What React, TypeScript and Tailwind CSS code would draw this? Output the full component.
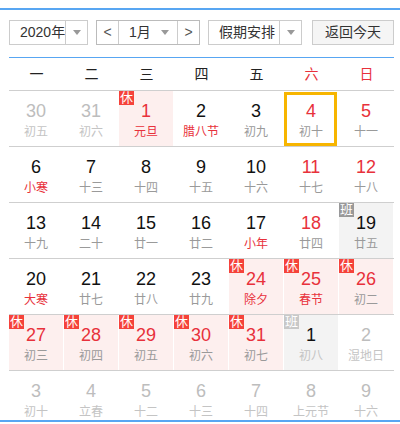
import React from "react";

type Cell = {
  d: number;
  l: string;
  other?: boolean;
  redNum?: boolean;
  redLunar?: boolean;
  rest?: boolean;
  work?: boolean;
  sel?: boolean;
};

const rows: Cell[][] = [
  [
    { d: 30, l: "初五", other: true },
    { d: 31, l: "初六", other: true },
    { d: 1, l: "元旦", rest: true, redNum: true, redLunar: true },
    { d: 2, l: "腊八节", redLunar: true },
    { d: 3, l: "初九" },
    { d: 4, l: "初十", redNum: true, sel: true },
    { d: 5, l: "十一", redNum: true },
  ],
  [
    { d: 6, l: "小寒", redLunar: true },
    { d: 7, l: "十三" },
    { d: 8, l: "十四" },
    { d: 9, l: "十五" },
    { d: 10, l: "十六" },
    { d: 11, l: "十七", redNum: true },
    { d: 12, l: "十八", redNum: true },
  ],
  [
    { d: 13, l: "十九" },
    { d: 14, l: "二十" },
    { d: 15, l: "廿一" },
    { d: 16, l: "廿二" },
    { d: 17, l: "小年", redLunar: true },
    { d: 18, l: "廿四", redNum: true },
    { d: 19, l: "廿五", work: true },
  ],
  [
    { d: 20, l: "大寒", redLunar: true },
    { d: 21, l: "廿七" },
    { d: 22, l: "廿八" },
    { d: 23, l: "廿九" },
    { d: 24, l: "除夕", rest: true, redNum: true, redLunar: true },
    { d: 25, l: "春节", rest: true, redNum: true, redLunar: true },
    { d: 26, l: "初二", rest: true, redNum: true },
  ],
  [
    { d: 27, l: "初三", rest: true, redNum: true },
    { d: 28, l: "初四", rest: true, redNum: true },
    { d: 29, l: "初五", rest: true, redNum: true },
    { d: 30, l: "初六", rest: true, redNum: true },
    { d: 31, l: "初七", rest: true, redNum: true },
    { d: 1, l: "初八", work: true, other: true },
    { d: 2, l: "湿地日", other: true },
  ],
  [
    { d: 3, l: "初十", other: true },
    { d: 4, l: "立春", other: true },
    { d: 5, l: "十二", other: true },
    { d: 6, l: "十三", other: true },
    { d: 7, l: "十四", other: true },
    { d: 8, l: "上元节", other: true },
    { d: 9, l: "十六", other: true },
  ],
];

const Arrow = () => (
  <span className="inline-block w-0 h-0 border-l-[4px] border-r-[4px] border-t-[5px] border-l-transparent border-r-transparent border-t-[#999]" />
);

function DayCell({ c }: { c: Cell }) {
  let bg = "";
  if (c.rest) bg = "bg-[#fdefee]";
  if (c.work) bg = "bg-[#f3f3f3]";
  let numColor = "text-[#111]";
  if (c.redNum) numColor = "text-[#e8313b]";
  if (c.other && !c.work) numColor = "text-[#bdbdbd]";
  let lunarColor = "text-[#9a9a9a]";
  if (c.redLunar) lunarColor = "text-[#e8313b]";
  if (c.other) lunarColor = "text-[#c4c4c4]";
  return (
    <div className="relative h-[55px]">
      <div className={`h-full mr-px flex flex-col items-center ${bg}`}>
        <span className={`mt-[9px] text-[18px] leading-[22px] ${numColor}`}>{c.d}</span>
        <span className={`mt-[2px] text-[12px] leading-[16px] whitespace-nowrap ${lunarColor}`}>{c.l}</span>
      </div>
      {c.rest && (
        <span className="absolute left-0 top-0 w-[15px] h-[14px] bg-[#f5423a] text-white text-[13px] leading-[14px] flex items-center justify-center">
          休
        </span>
      )}
      {c.work && (
        <span
          className={`absolute left-0 top-0 w-[15px] h-[14px] text-white text-[13px] leading-[14px] flex items-center justify-center ${
            c.other ? "bg-[#c8c8c8]" : "bg-[#999]"
          }`}
        >
          班
        </span>
      )}
      {c.sel && (
        <div className="absolute left-0 right-[2px] top-[1px] bottom-0 border-[3px] border-[#f7b500]" />
      )}
    </div>
  );
}

export default function App() {
  const week = ["一", "二", "三", "四", "五", "六", "日"];
  return (
    <div className="w-[400px] h-[424px] bg-white font-['Liberation_Sans','Noto_Sans_CJK_SC',sans-serif]">
      <div className="mt-2 h-[414px] border-t-2 border-b-2 border-[#58a6f2]">
        <div className="pl-[9px] pt-[10px] flex items-center h-[35px] text-[14px] text-[#333] whitespace-nowrap">
          <div className="w-[79px] h-[25px] border border-[#ccc] flex">
            <div className="w-[55px] pl-[10px] flex items-center">2020年</div>
            <div className="flex-1 border-l border-[#ccc] flex items-center justify-center">
              <Arrow />
            </div>
          </div>
          <div className="ml-[8px] w-[104px] h-[25px] border border-[#bbb] flex">
            <div className="w-[22px] border-r border-[#ccc] flex items-center justify-center text-[#555]">&lt;</div>
            <div className="flex-1 flex items-center pl-[10px]">
              <span>1月</span>
              <span className="ml-auto mr-[8px] flex"><Arrow /></span>
            </div>
            <div className="w-[22px] border-l border-[#ccc] flex items-center justify-center text-[#555]">&gt;</div>
          </div>
          <div className="ml-[8px] w-[94px] h-[25px] border border-[#ccc] flex">
            <div className="w-[70px] pl-[10px] flex items-center">假期安排</div>
            <div className="flex-1 border-l border-[#ccc] flex items-center justify-center">
              <Arrow />
            </div>
          </div>
          <div className="ml-[10px] w-[82px] h-[25px] border border-[#ccc] bg-[#f5f5f5] flex items-center justify-center">
            返回今天
          </div>
        </div>
        <div className="ml-[9px] w-[385px] mt-[12px] border-t border-[#58a6f2]">
          <div className="grid grid-cols-7 h-[32px] items-center text-[14px]">
            {week.map((w, i) => (
              <div key={w} className={`text-center ${i >= 5 ? "text-[#e8313b]" : "text-[#222]"}`}>
                {w}
              </div>
            ))}
          </div>
          {rows.map((r, ri) => (
            <div key={ri} className="grid grid-cols-7 border-t border-[#cfcfcf]">
              {r.map((c, ci) => (
                <DayCell key={ci} c={c} />
              ))}
            </div>
          ))}
        </div>
      </div>
    </div>
  );
}
